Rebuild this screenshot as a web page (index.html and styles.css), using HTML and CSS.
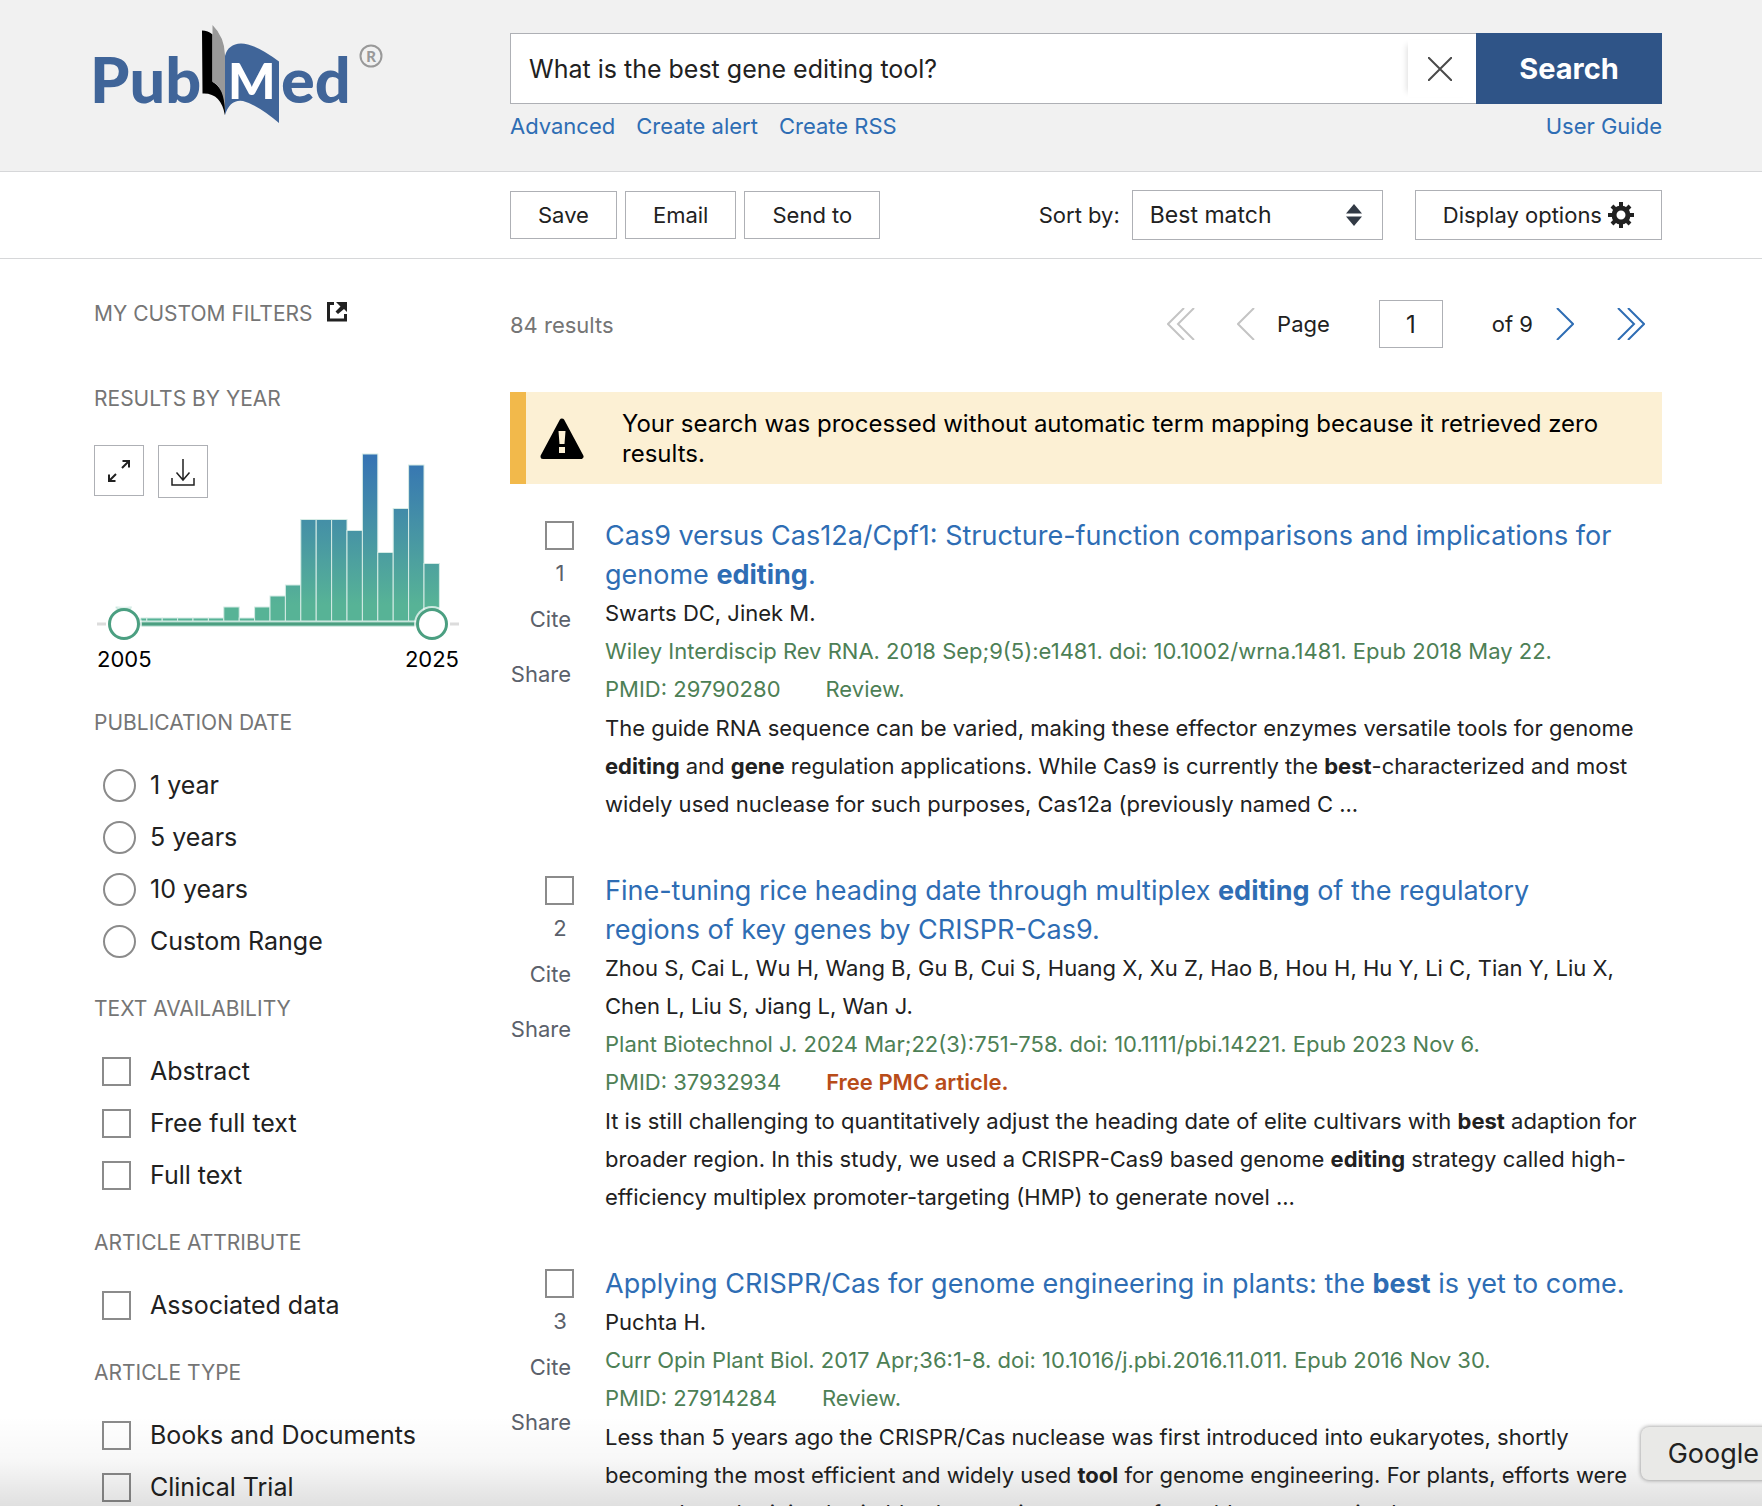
FILE: index.html
```html
<!DOCTYPE html>
<html lang="en">
<head>
	<meta charset="UTF-8">
	<title>What is the best gene editing tool? - Search Results - PubMed</title>
	<link rel="stylesheet" href="styles.css">
</head>
<body>
<div class="page">
	<header class="header">
		<a class="logo" href="#" aria-label="PubMed">
			<svg width="290" height="106" viewBox="0 0 290 106">
				<path d="M108 10.500q6 0 10.500 4v47q11 7 12.500 20v14q-4-23-22.500-22z" fill="#000"/>
				<path d="M118.500 5q12 12 12.500 30v56q-1-24-12.500-29z" fill="#999"/>
				<path d="M131 36q3-12 16-12.500q14 0 38 18v61.500q-21-18-36-22q-13-2-18 14z" fill="#406599"/>
				<text class="logo-text" x="-4" y="83">Pub</text>
				<text class="logo-m" x="134" y="79">M</text>
				<text class="logo-text" x="187" y="83">ed</text>
				<circle cx="277" cy="36" r="10.500" fill="none" stroke="#999" stroke-width="2"/>
				<text class="logo-reg" x="277" y="42">R</text>
			</svg>
		</a>
		<div class="search">
			<form class="search-form">
				<div class="search-box">
					<input class="search-input" type="text" aria-label="Search term" value="What is the best gene editing tool?">
					<button class="clear-btn" type="button" aria-label="Clear search">
						<svg width="24" height="24" viewBox="0 0 24 24"><path d="M0 0L24 24M24 0L0 24" stroke="#4a4a4a" stroke-width="2" fill="none"/></svg>
					</button>
				</div>
				<button class="search-btn" type="button">Search</button>
			</form>
			<nav class="search-links">
				<a href="#">Advanced</a>
				<a href="#">Create alert</a>
				<a href="#">Create RSS</a>
				<a class="guide" href="#">User Guide</a>
			</nav>
		</div>
	</header>

	<div class="toolbar">
		<button class="btn" type="button">Save</button>
		<button class="btn" type="button">Email</button>
		<button class="btn" type="button">Send to</button>
		<label class="sort-label" for="sort">Sort by:</label>
		<div class="sort">
			<select id="sort">
				<option>Best match</option>
				<option>Most recent</option>
				<option>Publication date</option>
			</select>
			<svg class="sort-arrows" width="16" height="22" viewBox="0 0 16 22"><path d="M8 0l8 9.500H0zM8 22l8-9.500H0z" fill="#323a45"/></svg>
		</div>
		<button class="btn display-btn" type="button">Display options
			<svg width="26" height="26" viewBox="0 0 26 26">
				<circle cx="13" cy="13" r="7" fill="none" stroke="#212121" stroke-width="5"/>
				<path d="M13 0v5M13 21v5M0 13h5M21 13h5M4 4l4 4M18 18l4 4M22 4l-4 4M8 18l-4 4" stroke="#212121" stroke-width="4"/>
			</svg>
		</button>
	</div>

	<div class="content">
		<aside class="sidebar">
			<h3 class="custom">My custom filters
				<a href="#" aria-label="Edit custom filters"><svg width="20" height="20" viewBox="0 0 20 20">
					<path d="M7 1.500H1.500v16.500h17v-6" fill="none" stroke="#212121" stroke-width="3"/>
					<path d="M9 0h11v10l-3-3-6 5-2.500-2.500 5-5z" fill="#212121"/>
				</svg></a>
			</h3>
			<h3>Results by year</h3>
			<div class="timeline">
				<svg class="chart" width="368" height="200" viewBox="0 0 368 200">
					<defs>
						<linearGradient id="bars" gradientUnits="userSpaceOnUse" x1="0" y1="9" x2="0" y2="160">
							<stop offset="0" stop-color="#3573b4"/>
							<stop offset="1" stop-color="#57b396"/>
						</linearGradient>
					</defs>
					<g fill="url(#bars)" stroke="#d5ebe5" stroke-width="1">
						<rect x="22" y="162" width="15.400" height="14"/>
						<rect x="37.400" y="173" width="15.400" height="3"/>
						<rect x="52.800" y="173" width="15.400" height="3"/>
						<rect x="68.200" y="173" width="15.400" height="3"/>
						<rect x="83.600" y="173" width="15.400" height="3"/>
						<rect x="99" y="173" width="15.400" height="3"/>
						<rect x="114.400" y="173" width="15.400" height="3"/>
						<rect x="129.800" y="162" width="15.400" height="14"/>
						<rect x="145.200" y="173" width="15.400" height="3"/>
						<rect x="160.600" y="162" width="15.400" height="14"/>
						<rect x="176" y="151" width="15.400" height="25"/>
						<rect x="191.400" y="140" width="15.400" height="36"/>
						<rect x="206.800" y="74.500" width="15.400" height="101.500"/>
						<rect x="222.200" y="74.500" width="15.400" height="101.500"/>
						<rect x="237.600" y="74.500" width="15.400" height="101.500"/>
						<rect x="253" y="85.500" width="15.400" height="90.500"/>
						<rect x="268.400" y="9" width="15.400" height="167"/>
						<rect x="283.800" y="107.500" width="15.400" height="68.500"/>
						<rect x="299.200" y="63.500" width="15.400" height="112.500"/>
						<rect x="314.600" y="20" width="15.400" height="156"/>
						<rect x="330" y="118.500" width="15.400" height="57.500"/>
					</g>
					<path d="M3 179h9M356 179h9" stroke="#dcdcdc" stroke-width="3"/>
					<path d="M46 179h276" stroke="#a9d6c7" stroke-width="5"/>
					<path d="M46 179h276" stroke="#4b9f81" stroke-width="3"/>
				</svg>
				<div class="chart-btns">
					<button class="icon-btn" type="button" aria-label="Expand chart">
						<svg width="22" height="22" viewBox="0 0 22 22"><path d="M14 8l7-7M14.500 1H21v6.500M8 14l-7 7M1 14.500V21h6.500" fill="none" stroke="#212121" stroke-width="2"/></svg>
					</button>
					<button class="icon-btn tall" type="button" aria-label="Download chart">
						<svg width="24" height="28" viewBox="0 0 24 28"><path d="M12 1v21M5.500 14.500L12 22l6.500-7.500M1 20v7h22v-7" fill="none" stroke="#212121" stroke-width="1.500"/></svg>
					</button>
				</div>
				<input class="range" type="range" min="2005" max="2025" value="2005" aria-label="Start year">
				<input class="range" type="range" min="2005" max="2025" value="2025" aria-label="End year">
			</div>
			<div class="years"><span>2005</span><span>2025</span></div>

			<h3>Publication date</h3>
			<ul class="filters">
				<li><label><input type="radio" name="date">1 year</label></li>
				<li><label><input type="radio" name="date">5 years</label></li>
				<li><label><input type="radio" name="date">10 years</label></li>
				<li><label><input type="radio" name="date">Custom Range</label></li>
			</ul>
			<h3>Text availability</h3>
			<ul class="filters">
				<li><label><input type="checkbox">Abstract</label></li>
				<li><label><input type="checkbox">Free full text</label></li>
				<li><label><input type="checkbox">Full text</label></li>
			</ul>
			<h3>Article attribute</h3>
			<ul class="filters">
				<li><label><input type="checkbox">Associated data</label></li>
			</ul>
			<h3>Article type</h3>
			<ul class="filters">
				<li><label><input type="checkbox">Books and Documents</label></li>
				<li><label><input type="checkbox">Clinical Trial</label></li>
			</ul>
		</aside>

		<main class="results">
			<div class="results-top">
				<span class="amount">84 results</span>
				<div class="pager">
					<button class="page-btn first" type="button" disabled aria-label="First page"><svg width="28" height="32" viewBox="0 0 28 32"><path d="M17 0L1 16l16 16M27 0L11 16l16 16"/></svg></button>
					<button class="page-btn prev" type="button" disabled aria-label="Previous page"><svg width="18" height="32" viewBox="0 0 18 32"><path d="M17 0L1 16l16 16"/></svg></button>
					<label for="page">Page</label>
					<input id="page" class="page-input" type="text" value="1">
					<span>of 9</span>
					<button class="page-btn next" type="button" aria-label="Next page"><svg width="18" height="32" viewBox="0 0 18 32"><path d="M1 0l16 16L1 32"/></svg></button>
					<button class="page-btn last" type="button" aria-label="Last page"><svg width="28" height="32" viewBox="0 0 28 32"><path d="M1 0l16 16L1 32M11 0l16 16-16 16"/></svg></button>
				</div>
			</div>

			<div class="alert">
				<svg width="44" height="42" viewBox="0 0 44 42">
					<path d="M22 3L41 38.500H3z" fill="#000" stroke="#000" stroke-width="5" stroke-linejoin="round"/>
					<path d="M18.500 13h7l-1 13h-5zM19 29h6v6h-6z" fill="#fcf0d4"/>
				</svg>
				<p>Your search was processed without automatic term mapping because it retrieved zero results.</p>
			</div>

			<article class="result">
				<div class="actions">
					<input type="checkbox" id="r1" aria-label="Select result 1">
					<label for="r1">1</label>
					<button type="button">Cite</button>
					<button type="button">Share</button>
				</div>
				<div class="docsum">
					<a class="title" href="#">Cas9 versus Cas12a/Cpf1: Structure-function comparisons and implications for genome <b>editing</b>.</a>
					<p>Swarts DC, Jinek M.</p>
					<p class="cit">Wiley Interdiscip Rev RNA. 2018 Sep;9(5):e1481. doi: 10.1002/wrna.1481. Epub 2018 May 22.</p>
					<p class="cit"><span class="pmid">PMID: 29790280</span>Review.</p>
					<p class="snippet">The guide RNA sequence can be varied, making these effector enzymes versatile tools for genome <b>editing</b> and <b>gene</b> regulation applications. While Cas9 is currently the <b>best</b>-characterized and most widely used nuclease for such purposes, Cas12a (previously named C ...</p>
				</div>
			</article>

			<article class="result">
				<div class="actions">
					<input type="checkbox" id="r2" aria-label="Select result 2">
					<label for="r2">2</label>
					<button type="button">Cite</button>
					<button type="button">Share</button>
				</div>
				<div class="docsum">
					<a class="title" href="#">Fine-tuning rice heading date through multiplex <b>editing</b> of the regulatory regions of key genes by CRISPR-Cas9.</a>
					<p>Zhou S, Cai L, Wu H, Wang B, Gu B, Cui S, Huang X, Xu Z, Hao B, Hou H, Hu Y, Li C, Tian Y, Liu X, Chen L, Liu S, Jiang L, Wan J.</p>
					<p class="cit">Plant Biotechnol J. 2024 Mar;22(3):751-758. doi: 10.1111/pbi.14221. Epub 2023 Nov 6.</p>
					<p class="cit"><span class="pmid">PMID: 37932934</span><b class="free">Free PMC article.</b></p>
					<p class="snippet">It is still challenging to quantitatively adjust the heading date of elite cultivars with <b>best</b> adaption for broader region. In this study, we used a CRISPR-Cas9 based genome <b>editing</b> strategy called high-efficiency multiplex promoter-targeting (HMP) to generate novel ...</p>
				</div>
			</article>

			<article class="result">
				<div class="actions">
					<input type="checkbox" id="r3" aria-label="Select result 3">
					<label for="r3">3</label>
					<button type="button">Cite</button>
					<button type="button">Share</button>
				</div>
				<div class="docsum">
					<a class="title" href="#">Applying CRISPR/Cas for genome engineering in plants: the <b>best</b> is yet to come.</a>
					<p>Puchta H.</p>
					<p class="cit">Curr Opin Plant Biol. 2017 Apr;36:1-8. doi: 10.1016/j.pbi.2016.11.011. Epub 2016 Nov 30.</p>
					<p class="cit"><span class="pmid">PMID: 27914284</span>Review.</p>
					<p class="snippet">Less than 5 years ago the CRISPR/Cas nuclease was first introduced into eukaryotes, shortly becoming the most efficient and widely used <b>tool</b> for genome engineering. For plants, efforts were centred on obtaining heritable changes in most transformable crop species by ...</p>
				</div>
			</article>
		</main>
	</div>
	<div class="fade"></div>
	<div class="dock-tip">Google</div>
</div>
</body>
</html>
```

FILE: styles.css
```css
*{
	box-sizing:border-box;
	margin:0;
	padding:0;
	list-style:none;
}
body{
	font-family:Inter,"Liberation Sans",sans-serif;
	font-size:22px;
	color:#212121;
	background:#fff;
}
a{
	color:#2e6db4;
	text-decoration:none;
}
button,input,select{
	font-family:inherit;
	font-size:inherit;
	color:inherit;
	border:0;
	border-radius:0;
	background:none;
}
svg{
	display:block;
}
.page{
	position:relative;
	height:100vh;
	overflow:hidden;
}

/* header */
.header{
	display:flex;
	height:172px;
	padding:0 100px 0 94px;
	background:#f1f1f1;
	border-bottom:1px solid #d6d7d9;
}
.logo{
	width:416px;
	flex:none;
	padding-top:20px;
}
.logo svg{
	overflow:visible;
}
.logo-text{
	font:900 63px Lato,sans-serif;
	fill:#406599;
}
.logo-m{
	font:900 50px Lato,sans-serif;
	fill:#fff;
}
.logo-reg{
	font:900 15px Lato,sans-serif;
	fill:#999;
	text-anchor:middle;
}
.search{
	flex:1;
	padding-top:33px;
}
.search-form{
	display:flex;
	height:71px;
}
.search-box{
	display:flex;
	flex:1;
	align-items:center;
	background:#fff;
	border:1px solid #aeb0b5;
	border-right:0;
}
.search-input{
	flex:1;
	padding-left:18px;
	font-size:25px;
	outline:none;
}
.clear-btn{
	width:68px;
	height:57px;
	padding-left:20px;
	box-shadow:-6px 0 6px -5px #ddd;
}
.search-btn{
	width:186px;
	background:#2f5487;
	color:#fff;
	font-size:29px;
	font-weight:700;
}
.search-links{
	display:flex;
	gap:21px;
	padding-top:8px;
	line-height:28px;
}
.guide{
	margin-left:auto;
}

/* toolbar */
.toolbar{
	display:flex;
	align-items:center;
	height:87px;
	padding:0 100px 0 510px;
	border-bottom:1px solid #d6d7d9;
}
.btn{
	height:48px;
	padding:0 27px;
	margin-right:8px;
	border:1px solid #aeb0b5;
}
.sort-label{
	margin-left:auto;
	margin-right:12px;
}
.sort{
	position:relative;
	width:251px;
	margin-right:32px;
}
.sort select{
	width:100%;
	height:50px;
	padding-left:17px;
	border:1px solid #aeb0b5;
	font-size:23px;
	appearance:none;
}
.sort-arrows{
	position:absolute;
	right:21px;
	top:14px;
	pointer-events:none;
}
.display-btn{
	display:flex;
	align-items:center;
	gap:6px;
	height:50px;
	margin-right:0;
}

/* filters */
.content{
	display:flex;
	padding:0 100px 0 94px;
}
.sidebar{
	width:416px;
	flex:none;
	padding-top:43px;
}
.sidebar h3{
	font-size:21px;
	font-weight:400;
	line-height:24px;
	color:#757575;
	text-transform:uppercase;
}
.sidebar .custom{
	display:flex;
	gap:14px;
	margin-bottom:61px;
}
.timeline{
	position:relative;
	height:200px;
	margin-top:34px;
}
.chart-btns{
	position:absolute;
	left:0;
	top:0;
	display:flex;
	align-items:flex-start;
	gap:14px;
}
.icon-btn{
	display:flex;
	align-items:center;
	justify-content:center;
	width:50px;
	height:51px;
	border:1px solid #aeb0b5;
}
.icon-btn.tall{
	height:53px;
}
.range{
	position:absolute;
	left:14px;
	top:163px;
	width:340px;
	height:32px;
	appearance:none;
	pointer-events:none;
}
.range::-webkit-slider-thumb{
	appearance:none;
	width:32px;
	height:32px;
	border:3px solid #4b9f81;
	border-radius:50%;
	background:#fff;
	box-shadow:0 0 0 2px rgba(255,255,255,.7);
	pointer-events:auto;
}
.years{
	display:flex;
	justify-content:space-between;
	width:368px;
	padding:0 3px;
	margin:2px 0 40px;
	line-height:24px;
	color:#000;
}
.filters{
	padding:24px 0 30px 8px;
}
.filters label{
	display:flex;
	align-items:center;
	height:52px;
	font-size:25px;
}
input[type=checkbox],input[type=radio]{
	appearance:none;
	flex:none;
	width:29px;
	height:29px;
	margin-right:19px;
	border:2px solid #8b8b8b;
	background:#fff;
}
input[type=radio]{
	width:33px;
	height:33px;
	margin:0 14px 0 1px;
	border-radius:50%;
}

/* results */
.results{
	flex:1;
	min-width:0;
	padding-top:41px;
}
.results-top{
	display:flex;
	justify-content:space-between;
	align-items:center;
	height:48px;
	margin-bottom:44px;
}
.amount{
	padding-top:2px;
	color:#757575;
}
.pager{
	display:flex;
	align-items:center;
	padding-right:17px;
}
.page-btn svg{
	fill:none;
	stroke:#2e6db4;
	stroke-width:2;
}
.page-btn:disabled svg{
	stroke:#c4c4c4;
}
.prev{
	margin:0 22px 0 42px;
}
.next{
	margin:0 43px 0 23px;
}
.page-input{
	width:64px;
	height:48px;
	margin:0 49px;
	border:1px solid #aeb0b5;
	font-size:24px;
	text-align:center;
}
.alert{
	display:flex;
	align-items:center;
	height:92px;
	padding:2px 32px 0 14px;
	margin-bottom:32px;
	border-left:16px solid #f2b94b;
	background:#fcf0d4;
	color:#000;
}
.alert svg{
	flex:none;
	margin-right:38px;
}
.alert p{
	font-size:24px;
	line-height:30px;
}
.result{
	display:flex;
	gap:34px;
	margin-bottom:48px;
}
.actions{
	display:flex;
	flex-direction:column;
	align-items:flex-end;
	flex:none;
	width:61px;
	padding-top:5px;
	color:#5b616b;
}
.actions input[type=checkbox]{
	margin:0 -3px 0 0;
}
.actions label{
	width:22px;
	margin-top:8px;
	line-height:30px;
	text-align:center;
}
.actions button{
	height:30px;
	margin-top:16px;
}
.actions button + button{
	margin-top:25px;
}
.docsum{
	flex:1;
	line-height:38px;
}
.title{
	display:block;
	padding-right:34px;
	font-size:27px;
	line-height:39px;
}
.title b{
	font-weight:700;
}
.cit{
	color:#4d8055;
}
.pmid{
	margin-right:45px;
}
.free{
	color:#b84c19;
	font-weight:600;
}
.snippet{
	margin-top:1px;
}

/* bottom edge of the screen */
.fade{
	position:absolute;
	left:0;
	right:0;
	bottom:0;
	height:90px;
	background:linear-gradient(rgba(0,0,0,0),rgba(0,0,0,.03) 50%,rgba(0,0,0,.12));
	pointer-events:none;
}
.dock-tip{
	position:absolute;
	right:-10px;
	bottom:26px;
	padding:0 13px 0 27px;
	border-radius:8px;
	background:#e9e9e7;
	box-shadow:0 0 4px rgba(0,0,0,.45);
	font-size:27px;
	line-height:53px;
}
```
